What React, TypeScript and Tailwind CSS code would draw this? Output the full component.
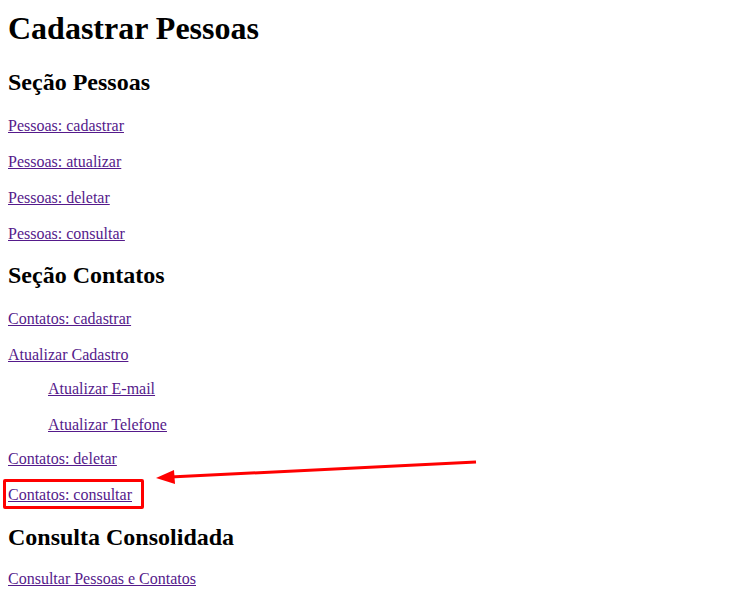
import React from "react";

const linkCls = "text-[#551a8b] underline text-[16px] leading-[18px]";

function L({ children, className = "" }: { children: React.ReactNode; className?: string }) {
  return (
    <p className={`${className} h-[18px]`}>
      <a href="#" className={linkCls}>
        {children}
      </a>
    </p>
  );
}

export default function App() {
  return (
    <div
      className="relative w-[749px] h-[603px] bg-white text-black overflow-hidden px-2"
      style={{ fontFamily: '"Liberation Serif", "Times New Roman", serif' }}
    >
      <div className="flex flex-col">
        <h1 className="text-[32px] font-bold leading-[37px] mt-[10px]">Cadastrar Pessoas</h1>
        <h2 className="text-[24px] font-bold leading-[28px] mt-[21px]">Seção Pessoas</h2>
        <L className="mt-[18px]">Pessoas: cadastrar</L>
        <L className="mt-[18px]">Pessoas: atualizar</L>
        <L className="mt-[18px]">Pessoas: deletar</L>
        <L className="mt-[18px]">Pessoas: consultar</L>
        <h2 className="text-[24px] font-bold leading-[28px] mt-[21px]">Seção Contatos</h2>
        <L className="mt-[18px]">Contatos: cadastrar</L>
        <L className="mt-[18px]">Atualizar Cadastro</L>
        <L className="mt-[16px] pl-[40px]">Atualizar E-mail</L>
        <L className="mt-[18px] pl-[40px]">Atualizar Telefone</L>
        <L className="mt-[16px]">Contatos: deletar</L>
        <L className="mt-[18px]">Contatos: consultar</L>
        <h2 className="text-[24px] font-bold leading-[28px] mt-[22px]">Consulta Consolidada</h2>
        <L className="mt-[16px]">Consultar Pessoas e Contatos</L>
      </div>

      <div className="absolute left-[3px] top-[479px] w-[141px] h-[30px] border-[3px] border-[#ff0000] rounded-[2px]" />

      <svg className="absolute left-0 top-0" width="749" height="603" viewBox="0 0 749 603">
        <line x1="476" y1="462" x2="170" y2="477" stroke="#ff0000" strokeWidth="3" />
        <polygon points="156,478 174,470 175,484" fill="#ff0000" />
      </svg>
    </div>
  );
}
